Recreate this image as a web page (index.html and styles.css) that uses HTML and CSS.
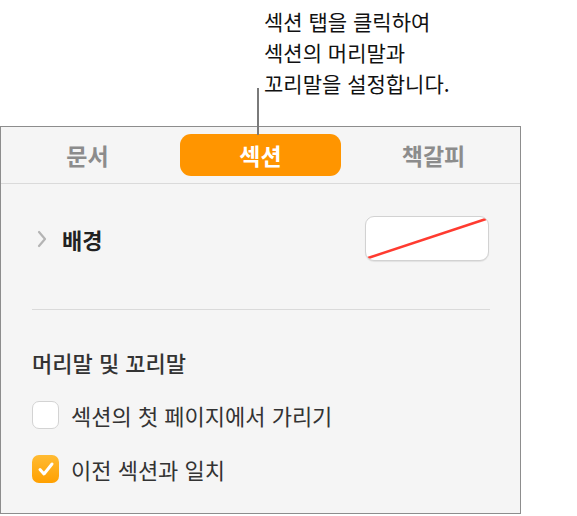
FILE: index.html
```html
<!DOCTYPE html>
<html lang="ko">
<head>
  <meta charset="UTF-8">
  <meta name="viewport" content="width=device-width, initial-scale=1.0">
  <title>섹션 설정</title>
  <link rel="stylesheet" href="styles.css">
</head>
<body>
  <div class="page">
    <div class="callout">
      <p>섹션 탭을 클릭하여</p>
      <p>섹션의 머리말과</p>
      <p>꼬리말을 설정합니다.</p>
    </div>
    <div class="leader"></div>

    <div class="panel">
      <div class="tabs">
        <div class="tab">문서</div>
        <div class="tab active">섹션</div>
        <div class="tab">책갈피</div>
      </div>

      <div class="bg-row">
        <div class="bg-label">
          <svg class="chevron" width="12" height="18" viewBox="0 0 12 18">
            <polyline points="3,2 9,9 3,16" fill="none" stroke="#b4b4b4" stroke-width="2.2" stroke-linecap="round" stroke-linejoin="round"/>
          </svg>
          <span>배경</span>
        </div>
        <div class="color-well">
          <svg width="124" height="45" viewBox="0 0 124 45">
            <line x1="3" y1="42" x2="121" y2="3" stroke="#ff3b30" stroke-width="2.5"/>
          </svg>
        </div>
      </div>

      <div class="divider"></div>

      <div class="section">
        <h3>머리말 및 꼬리말</h3>
        <label class="check-row">
          <span class="box"></span>
          <span>섹션의 첫 페이지에서 가리기</span>
        </label>
        <label class="check-row">
          <span class="box checked">
            <svg width="18" height="16" viewBox="0 0 18 16">
              <polyline points="3,8.5 7,13 15,3" fill="none" stroke="#fff" stroke-width="3" stroke-linecap="round" stroke-linejoin="round"/>
            </svg>
          </span>
          <span>이전 섹션과 일치</span>
        </label>
      </div>
    </div>
  </div>
</body>
</html>
```

FILE: styles.css
```css
body {
  margin: 0;
  background: #fff;
  font-family: "Noto Sans CJK KR", "Noto Sans", sans-serif;
}

.page {
  position: relative;
  width: 577px;
  height: 516px;
  overflow: hidden;
}

.callout {
  padding: 6px 0 0 264px;
  font-size: 21px;
  line-height: 31px;
  color: #111;
}

.callout p {
  margin: 0;
}

/* annotation line from the note down to the tab */
.leader {
  position: absolute;
  left: 257px;
  top: 88px;
  width: 2px;
  height: 47px;
  background: #7a7a7a;
}

.panel {
  box-sizing: border-box;
  width: 521px;
  height: 388px;
  margin-top: 27px;
  border: 1px solid #8d8d8d;
  background: #f5f5f5;
}

.tabs {
  display: grid;
  grid-template-columns: repeat(3, 1fr);
  gap: 12px;
  padding: 7px 6px;
  border-bottom: 1px solid #dadada;
}

.tab {
  height: 42px;
  display: flex;
  align-items: center;
  justify-content: center;
  font-size: 23px;
  font-weight: bold;
  color: #8c8c8c;
  border-radius: 11px;
}

.tab.active {
  background: #ff9500;
  color: #fff;
}

.bg-row {
  display: flex;
  align-items: center;
  justify-content: space-between;
  padding: 32px 31px 0 35px;
}

.bg-label {
  display: flex;
  align-items: center;
  gap: 14px;
  font-size: 22px;
  font-weight: bold;
  color: #222;
}

.color-well {
  box-sizing: border-box;
  width: 124px;
  height: 45px;
  background: #fff;
  border: 1px solid #d2d2d2;
  border-radius: 9px;
  box-shadow: 0 1px 1px rgba(0, 0, 0, 0.08);
  overflow: hidden;
}

.color-well svg {
  display: block;
  margin: -1px;
}

.divider {
  height: 1px;
  margin: 48px 30px 0 31px;
  background: #dadada;
}

.section {
  padding: 38px 0 0 31px;
}

.section h3 {
  margin: 0 0 24px;
  font-size: 22px;
  line-height: 28px;
  font-weight: 500;
  color: #333;
}

.check-row {
  display: flex;
  align-items: center;
  gap: 12px;
  height: 30px;
  margin-bottom: 24px;
  font-size: 22px;
  color: #333;
}

.box {
  box-sizing: border-box;
  width: 27px;
  height: 28px;
  border: 1px solid #d3d3d3;
  border-radius: 7px;
  background: #fff;
  display: flex;
  align-items: center;
  justify-content: center;
}

.box.checked {
  border: none;
  background: linear-gradient(#ffbb33, #ffa000);
}
```
